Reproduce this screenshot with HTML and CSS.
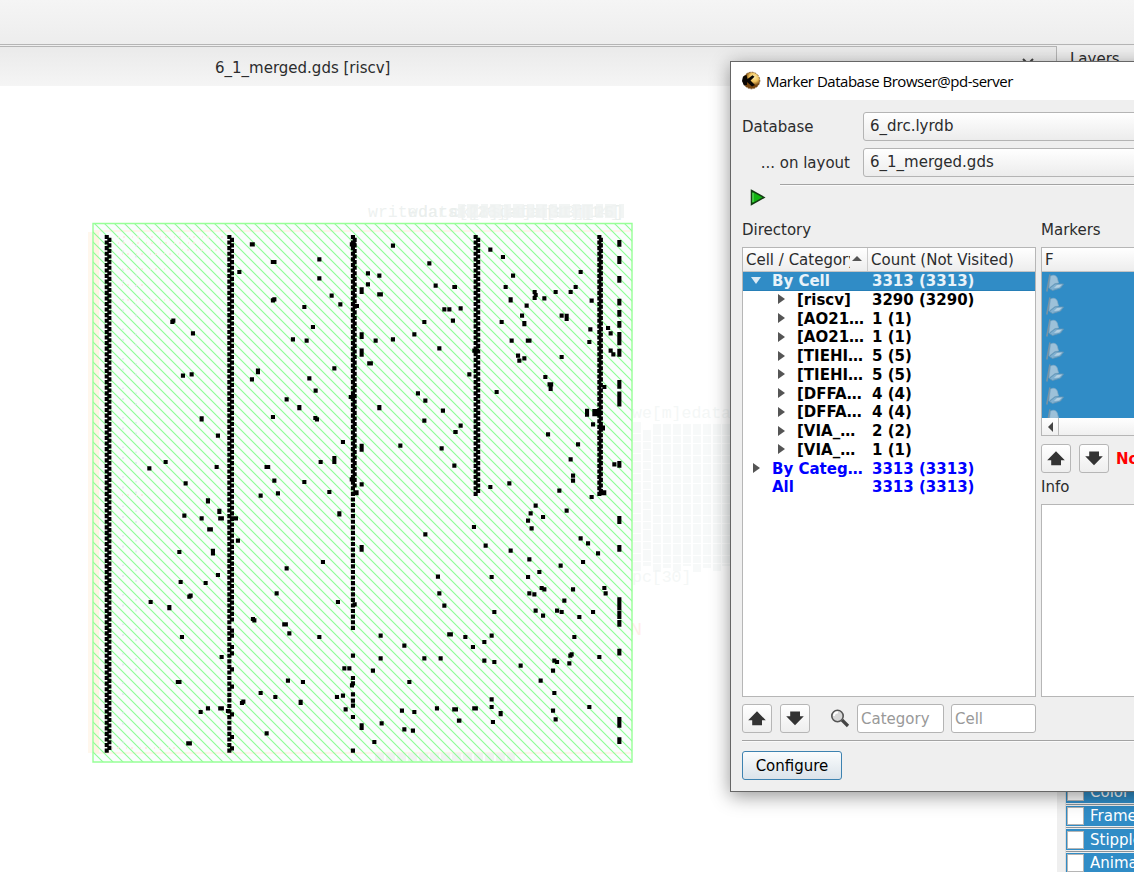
FILE: index.html
```html
<!DOCTYPE html>
<html lang="en">
<head>
<meta charset="utf-8">
<title>6_1_merged.gds [riscv]</title>
<link rel="stylesheet" href="styles.css">
</head>
<body>
<svg class="defs" width="0" height="0">
  <symbol id="up" viewBox="0 0 18 15"><path d="M9 0.3 17.8 9.2H14V14.3H4.2V9.2H.2Z" fill="#333"/></symbol>
  <symbol id="down" viewBox="0 0 18 15"><path d="M9 14.3 17.8 5.2H14V.5H4.2V5.2H.2Z" fill="#333"/></symbol>
  <symbol id="flag" viewBox="0 0 20 20"><path d="M5 1.5 1.800 18.500" stroke="#7893a5" stroke-width="1.600"/><path d="M5.500 3.500C8 1 12 2.500 12.500 6L13.500 10 10 10.500 4 15Z" fill="#9dc1d9" stroke="#86acc6" stroke-width=".7"/><path d="M4.500 15.500 10 11l8.500 0-3 4-8 2.500Z" fill="#7fb0d1" stroke="#6b97b4" stroke-width=".8"/><path d="m9 15 3-3 5-.5-3 3Z" fill="#b5d0e2"/></symbol>
</svg>
<main class="desktop">
  <div class="toolbar"></div>
  <div class="workspace">
    <section class="view">
      <div class="tab"><span>6_1_merged.gds [riscv]</span><svg width="14" height="9" viewBox="0 0 14 9"><path d="m1 1 5 5 5-5" fill="none" stroke="#444" stroke-width="2"/></svg></div>
      <svg class="layout" width="1057" height="786" viewBox="0 86 1057 786">
        <defs>
          <pattern id="hatch" width="10" height="10" patternUnits="userSpaceOnUse">
            <path d="M-9-10 11 10M1-10 21 10M-9 0 11 20" fill="none" stroke="#8cff96" stroke-width="1.150"/>
          </pattern>
        </defs>
        <g class="net">
          <text x="368" y="217">write</text><text x="408" y="217" textLength="212">wdata[28]data[31][14]</text>
          <text x="418" y="217" textLength="206">darst[26]addr[13][26]</text>
          <text x="450" y="217" textLength="174">ck[rs]4]instr[15]</text>
        </g>
        <path d="M458 211H624" stroke="#f0f3f2" stroke-width="14" stroke-dasharray="7 2 11 3" opacity=".8"/>
        <path d="M637 422V571M647 430V566M657 424V572M667 424V568M677 424V571M687 424V566M697 424V572M707 424V568M717 424V571M726 424V566" stroke="#f7f9f9" stroke-width="8" stroke-dasharray="11 1 7 1"/>
        <g class="net side"><text x="632" y="418">we[m]edata[</text><text x="632" y="582">pc[30]</text></g>
        <text class="pin" x="630" y="635">N</text>
        <path d="M88 232H93V753H88Z" fill="#fff7ed"/>
        <path d="M93 223.500H632V762H93Z" fill="#fafdfc"/>
        <path d="M93.500 232H99V753H93.500Z" fill="#fff3e2"/>
        <path d="M93 231H632M93 753H632" stroke="#fff1e3" stroke-width="1.500"/>
        <path d="M375 757H515" stroke="#f0f3f1" stroke-width="8" stroke-dasharray="9 2"/>
        <path d="M93 223.500H632V762H93Z" fill="url(#hatch)"/>
        <path d="M93 223.500H632V762H93Z" fill="none" stroke="#98ff98" stroke-width="1.400"/>
        <path d="M118 237H225M118 243H205M182 250H222M122 254H180M122 269H165M122 285H150M122 300H170M122 495H145M112 748H175" stroke="#ffe3dc" stroke-width="1.300" stroke-dasharray="1 4 2 7"/>
        <path d="M123 240V750M136 245V675" stroke="#dde0ee" stroke-width="1.300" stroke-dasharray="1.500 9 2 17"/>
        <path id="markers"/>
      </svg>
    </section>
    <aside class="dock">
      <h2>Layers</h2>
      <div class="layer-opts">
        <div><i></i>Color</div><div><i></i>Frame</div><div><i></i>Stipple</div><div><i></i>Animation</div>
      </div>
    </aside>
  </div>

  <section class="dialog">
    <header class="titlebar">
      <svg width="19" height="19" viewBox="0 0 19 19"><defs><radialGradient id="gold" cx=".65" cy=".3"><stop stop-color="#fff0b0"/><stop offset=".55" stop-color="#efc15b"/><stop offset="1" stop-color="#76450f"/></radialGradient></defs><circle cx="9.500" cy="9.500" r="8.300" fill="url(#gold)" stroke="#6d4210" stroke-width=".8" stroke-dasharray="2 1"/><path d="M1 5.500 4.500 4 5.500 8 10.500 4.200 12.500 5.800 8.500 9.500 13 14 10 15.500 5 11V14L2 14.500 0 10Z" fill="#0a0603"/></svg>
      <span>Marker Database Browser@pd-server</span>
    </header>
    <div class="body">
      <div class="field"><label>Database</label><div class="combo">6_drc.lyrdb</div></div>
      <div class="field"><label class="right">... on layout</label><div class="combo">6_1_merged.gds</div></div>
      <div class="run"><svg width="16" height="17" viewBox="0 0 16 17"><path d="M1.500 1.500 14 8.400 1.500 15.500Z" fill="#12b512" stroke="#133c13" stroke-width="1.500"/><path d="M3 4v9" stroke="#64d864" stroke-width="1.200"/></svg><hr></div>
      <div class="panes">
        <div class="pane left">
          <h3>Directory</h3>
          <div class="tree">
            <div class="thead"><span class="c1"><b>Cell / Category</b><i class="sort"></i></span><span>Count (Not Visited)</span></div>
            <div class="row sel"><i class="open"></i><span>By Cell</span><span>3313 (3313)</span></div>
            <div class="row sub"><i></i><span>[riscv]</span><span>3290 (3290)</span></div>
            <div class="row sub"><i></i><span>[AO21…</span><span>1 (1)</span></div>
            <div class="row sub"><i></i><span>[AO21…</span><span>1 (1)</span></div>
            <div class="row sub"><i></i><span>[TIEHI…</span><span>5 (5)</span></div>
            <div class="row sub"><i></i><span>[TIEHI…</span><span>5 (5)</span></div>
            <div class="row sub"><i></i><span>[DFFA…</span><span>4 (4)</span></div>
            <div class="row sub"><i></i><span>[DFFA…</span><span>4 (4)</span></div>
            <div class="row sub"><i></i><span>[VIA_…</span><span>2 (2)</span></div>
            <div class="row sub"><i></i><span>[VIA_…</span><span>1 (1)</span></div>
            <div class="row blue"><i></i><span>By Categ…</span><span>3313 (3313)</span></div>
            <div class="row blue"><i class="none"></i><span>All</span><span>3313 (3313)</span></div>
          </div>
          <div class="tools">
            <button><svg width="18" height="15"><use href="#up"/></svg></button>
            <button><svg width="18" height="15"><use href="#down"/></svg></button>
            <svg class="lens" width="20" height="20" viewBox="0 0 20 20"><path d="m12 11 6 6" stroke="#444" stroke-width="3.200"/><circle cx="7.500" cy="7" r="5.700" fill="#d8d8d8" stroke="#555" stroke-width="1.600"/><path d="M4 7a3.500 3.500 0 0 1 4-3.500" fill="none" stroke="#fff" stroke-width="2"/></svg>
            <input class="cat" placeholder="Category"><input class="cell" placeholder="Cell">
          </div>
        </div>
        <div class="pane">
          <h3>Markers</h3>
          <div class="list">
            <div class="thead"><span>F</span></div>
            <div class="flags"><svg><use href="#flag"/></svg><svg><use href="#flag"/></svg><svg><use href="#flag"/></svg><svg><use href="#flag"/></svg><svg><use href="#flag"/></svg><svg><use href="#flag"/></svg><svg><use href="#flag"/></svg></div>
            <div class="scroll"><span><i></i></span></div>
          </div>
          <div class="tools nav">
            <button><svg width="18" height="15"><use href="#up"/></svg></button>
            <button><svg width="18" height="15"><use href="#down"/></svg></button>
            <strong>No</strong>
          </div>
          <h3 class="info-label">Info</h3>
          <div class="info"></div>
        </div>
      </div>
      <hr class="rule">
      <button class="configure">Configure</button>
    </div>
  </section>
</main>
<script src="markers.js"></script>
</body>
</html>
```
FILE: styles.css
```css
* { box-sizing: border-box; }
body { margin: 0; font: 15px/18px "DejaVu Sans", sans-serif; color: #2b2c2d; }
h2, h3 { margin: 0; font-size: 15px; font-weight: 400; }
hr { margin: 0; border: 0; border-top: 1px solid #a3a3a3; border-bottom: 1px solid #fafafa; }
.defs { position: absolute; }
.desktop { position: relative; width: 1134px; height: 872px; overflow: hidden; background: #efefef; display: flex; flex-direction: column; }
.toolbar { height: 45px; flex: none; background: linear-gradient(#f5f5f5, #ededed); border-bottom: 1px solid #b5b5b5; }
.workspace { flex: 1; display: flex; padding-top: 1px; min-height: 0; }
.view { width: 1057px; flex: none; display: flex; flex-direction: column; }
.tab { height: 40px; flex: none; display: flex; align-items: center; justify-content: space-between; padding: 2px 20px 0 215px; border: solid #b5b5b5; border-width: 1px 1px 0 0; background: linear-gradient(#eaeaea, #f5f5f5); }
.tab svg { align-self: flex-start; margin-top: 9px; }
.layout { display: block; background: #fff; }
.net { font: 16.5px "Liberation Mono", monospace; fill: #e9eeec; fill-opacity: .8; }
.side { fill: #f1f5f4; }
.pin { font: 16px "DejaVu Sans", sans-serif; fill: #ffeee9; }
#markers { fill: none; stroke: #000; stroke-width: 4; }
.dock { flex: 1; min-width: 0; display: flex; flex-direction: column; justify-content: space-between; overflow: hidden; white-space: nowrap; }
.dock h2 { padding: 4px 0 0 13px; }
.layer-opts { margin-left: 8px; height: 91px; color: #fff; border-left: 1px solid #ddd; }
.layer-opts div { height: 23.700px; padding-left: 1px; display: flex; align-items: center; gap: 6px; background: #308cc6; border-bottom: 1px solid #8a949b; box-shadow: inset 0 -1px #eee, inset 0 1px #eee; }
.layer-opts i { width: 17px; height: 18px; background: #fff; border: 1px solid #b5b5b5; flex: none; }

.dialog { position: absolute; left: 730px; top: 61px; width: 440px; height: 731px; background: #efefef; border: 1px solid #666; box-shadow: 0 4px 18px rgba(0,0,0,.42); display: flex; flex-direction: column; }
.titlebar { height: 38px; flex: none; background: #fff; color: #000; display: flex; align-items: center; gap: 5px; padding: 0 0 1px 11px; font: 15px "Open Sans", sans-serif; letter-spacing: -.48px; white-space: nowrap; }
.body { flex: 1; padding: 12px 0 0 11px; display: flex; flex-direction: column; }
.field { height: 29px; margin-bottom: 7px; flex: none; display: flex; align-items: center; }
.field label { width: 121px; flex: none; }
.field .right { text-align: right; padding-right: 13px; }
.combo { flex: 1; height: 29px; padding-left: 6px; line-height: 27px; border: 1px solid #b4b4b4; border-radius: 3px; background: linear-gradient(#fff, #ececec); }
.run { height: 37px; flex: none; display: flex; }
.run svg { margin: 5px 0 0 8px; }
.run hr { flex: 1; height: 2px; margin-left: 14px; }
.panes { display: flex; gap: 5px; height: 512px; flex: none; }
.pane { flex: 1; min-width: 0; display: flex; flex-direction: column; }
.pane.left { width: 294px; flex: none; }
.pane h3 { height: 26px; flex: none; line-height: 18px; }
.tree { height: 450px; border: 1px solid #b6b6b6; background: #fff; flex: none; }
.thead { height: 24px; display: flex; line-height: 24px; background: linear-gradient(#fff, #ededed); border-bottom: 1px solid #c4c4c4; white-space: nowrap; }
.thead > span { padding-left: 3px; }
.thead .c1 { width: 125px; border-right: 1px solid #ccc; display: flex; align-items: center; gap: 2px; }
.thead b { width: 104px; overflow: hidden; font-weight: 400; }
.sort { border: solid transparent; border-width: 0 5px 5px; border-bottom-color: #555; margin-top: -3px; }
.row { height: 18.750px; line-height: 19px; display: grid; grid-template-columns: 29px 100px 1fr; font-weight: 700; color: #000; white-space: nowrap; align-items: center; }
.row.sub { grid-template-columns: 54px 75px 1fr; }
.row i { justify-self: end; margin: 0 12px 2px 0; border: solid transparent; border-width: 5px 0 5px 7px; border-left-color: #555; }
.row .open { margin-right: 11px; border-width: 7px 5px 0; border-top-color: #dcebf5; border-left-color: transparent; }
.row .none { visibility: hidden; }
.row.sel { background: #308cc6; color: #e9f3f9; border-bottom: 1px solid #277fb7; }
.row.blue { color: #00f; }
.tools { display: flex; align-items: center; margin-top: 7px; height: 29px; flex: none; }
.tools button { width: 30px; height: 29px; padding: 0; margin-right: 7.500px; border: 1px solid #b6b6b6; border-radius: 3px; background: linear-gradient(#fff, #eee); display: grid; place-items: center; flex: none; }
.lens { margin: 0 7px 0 13px; flex: none; }
.tools input { height: 29px; min-width: 0; padding: 0 3px; font: inherit; border: 1px solid #b4b4b4; border-radius: 3px; background: #fff; }
.tools input::placeholder { color: #999; }
.cat { width: 87px; margin-right: 7px; }
.cell { width: 85px; }
.list { height: 189px; flex: none; border: 1px solid #b6b6b6; background: #fff; }
.flags { height: 146px; background: #308cc6; overflow: hidden; display: flex; flex-direction: column; padding: 1px 0 0 3px; }
.flags svg { width: 20px; height: 20px; flex: none; margin-bottom: 2.500px; }
.scroll { height: 17px; background: linear-gradient(#fff, #f0f0f0); }
.scroll span { width: 17px; height: 17px; display: grid; place-items: center; border-right: 1px solid #bbb; }
.scroll i { border: solid transparent; border-width: 5px 5px 5px 0; border-right-color: #444; }
.nav { margin-top: 8px; }
.nav strong { color: #f00; }
.pane .info-label { height: 31px; padding-top: 5px; }
.info { height: 193px; border: 1px solid #b6b6b6; background: #fff; }
.rule { height: 2px; margin-top: 7px; flex: none; }
.configure { width: 100px; height: 29px; margin-top: 9px; padding: 0; font: inherit; color: #000; border: 1px solid #3d82b0; border-radius: 3px; background: linear-gradient(#fafcfd, #dbe3ea); }
```
FILE: markers.js
```js
// Each tile: origin in view pixels, then marker centres in thirds of a pixel.
// An optional third number is the marker width, a fourth its height.
const tiles = [
  [85, 200, [[502,133,15],[463,216],[262,366,12],[265,362,12],[324,400],[294,527],[320,523],[519,514,12,17],[501,538]]],
  [270, 200, [[11,186,17],[9,301],[13,298],[148,178],[148,235],[185,287],[211,313],[103,321],[129,381],[69,418],[110,422],[193,505],[118,535],[249,133,19],[369,137],[294,220],[328,227],[294,253],[275,272,12,20],[330,283,17],[478,190],[497,257],[553,261],[523,328],[538,328],[549,362],[463,366],[433,403],[508,445],[275,407,12,20],[275,458,12,25],[317,422],[369,418],[300,490,17],[260,318,14]]],
  [455, 200, [[106,149],[144,171],[174,227],[152,261],[167,300,12,16],[239,276],[242,285],[239,294],[268,295],[302,276],[347,276],[362,261],[377,216],[410,302],[215,317],[201,347],[320,347],[335,352,12,22],[208,371,12,16],[140,366],[406,388],[403,426],[170,422],[221,422,17],[189,467],[208,475],[193,482],[320,471],[271,531],[286,553,17],[287,565,12,16],[459,384],[467,400],[467,452],[475,463],[448,561],[62,452,20],[43,523],[17,325],[0,261],[493,130,12,20],[493,180,12,24],[493,238,12,20],[493,306,12,20],[493,340,12,20],[493,373,12,20],[493,416,12,40],[493,458,12,24],[493,553,12,26]]],
  [85, 385, [[350,102,12,16],[399,152],[395,246],[242,231],[193,250],[302,295],[369,348,12,16],[403,379,12,16],[408,400,17],[449,400,20],[350,400],[298,392],[375,433,17],[283,501],[384,501,12,20],[459,467],[527,332],[547,246,17],[399,570]]],
  [270, 385, [[137,17],[50,43],[88,68,12,16],[9,96],[136,99],[141,103],[219,171],[152,231],[193,225,12,24],[275,188,12,24],[275,298],[328,68,12,16],[444,25],[466,47],[519,77],[463,107],[556,141],[391,182],[515,190],[553,242],[13,287],[103,291],[24,325],[178,321],[208,387,12,16],[159,531],[50,550],[275,490,12,20],[466,448],[258,323,16,15],[243,36,14],[246,283,14]]],
  [455, 385, [[125,21],[17,122],[2,141],[163,295],[106,306],[287,6,12,18],[396,83,12,24],[424,83,24,22],[414,118],[443,129,14,15],[279,148],[369,178],[347,223],[354,272],[354,287],[313,317],[410,336],[445,323,18,15],[242,362],[227,385],[264,396],[219,407],[230,430],[335,377],[57,426],[92,482],[167,497],[377,460],[399,475],[429,505],[384,531],[317,542],[223,523],[253,561],[219,576],[110,576],[478,238],[493,5,12,12],[493,42,12,45],[493,238,12,20],[493,405,12,24],[493,490,12,20]]],
  [85, 575, [[287,21],[362,24],[313,65],[317,62],[197,81],[253,98,12,16],[291,186],[410,246],[504,132],[508,136],[281,321,17],[347,411],[369,400],[408,400,17],[429,408],[471,384],[475,380],[527,354],[545,475],[312,505,17],[441,167],[441,182],[441,216],[441,235],[441,283],[441,335],[441,418],[441,486],[441,520]]],
  [270, 575, [[20,55],[45,148,17],[58,175],[148,186],[204,81],[254,88],[223,280],[238,280],[54,317],[99,321],[16,366],[92,382,12,16],[201,366],[219,362],[227,403],[246,331],[309,287],[332,182],[332,250],[403,212],[463,250],[512,250],[504,5],[508,55],[523,92],[540,178,17],[418,321],[396,407],[433,411],[501,400],[555,403,17],[567,437],[335,445],[403,463],[429,467],[313,501],[275,455,12,20],[249,242],[249,309],[249,325],[249,358],[249,377],[249,392],[249,426],[249,527]]],
  [455, 575, [[110,6],[219,6],[260,39],[268,43],[223,55],[238,58],[354,43],[448,39],[452,55],[328,77],[242,107],[264,122],[306,107],[320,111],[373,126],[414,111],[118,111],[110,182],[88,201],[31,186],[54,216],[88,257],[118,261],[197,272],[358,186],[350,238],[346,242],[343,265],[433,246],[298,257],[306,261],[294,287],[257,317],[298,354],[294,407],[302,433],[403,396],[110,373],[110,396],[60,400,17],[137,416,12,16],[13,437],[114,441],[3,403],[493,87,12,40],[493,120,12,24],[493,145,12,20],[493,231,12,20],[493,442,12,32],[493,497,12,20]]]
];

// Regular marker columns: x, first y, last y.
const pitch = 5.583;
const columns = [
  [106.7, 237, 751], [109.3, 239.8, 749],
  [229.3, 237, 751], [232, 239.8, 620],
  [353, 237, 629], [354.7, 239.8, 491],
  [475.7, 237, 494], [478.2, 239.8, 492],
  [599.3, 237, 494], [600.8, 239.8, 492]
];

const bar = (x, y, w, h) =>
  `M${(x - w / 2 + 2).toFixed(1)} ${(y - h / 2 + 2).toFixed(1)}h${(w - 4).toFixed(1)}v${(h - 4).toFixed(1)}h${(4 - w).toFixed(1)}z`;
let d = "";
for (const [ox, oy, dots] of tiles)
  for (const [x, y, w = 12, h = 12] of dots)
    d += bar(ox + x / 3, oy + y / 3, Math.max(w / 3, 4.1), Math.max(h / 3, 4.1));
for (const [x, from, to] of columns)
  for (let y = from; y <= to; y += pitch) d += bar(x, y, 4.1, 4.1);
document.getElementById("markers").setAttribute("d", d);
```
